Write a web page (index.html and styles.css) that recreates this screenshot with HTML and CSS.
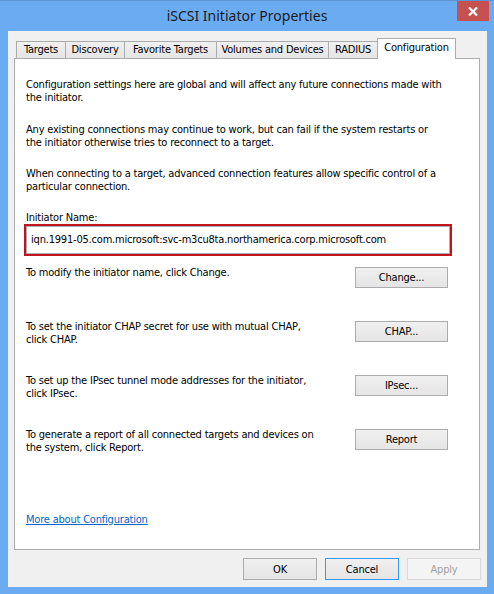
FILE: index.html
```html
<!DOCTYPE html>
<html>
<head>
<meta charset="utf-8">
<link rel="stylesheet" href="styles.css">
</head>
<body>
<div class="window">
  <div class="titlebar">
    <div class="spacer"></div>
    <div class="title">iSCSI Initiator Properties</div>
    <div class="close-wrap">
      <div class="close">
        <svg width="10" height="9" viewBox="0 0 10 9"><path d="M1 0.5 L9 8.5 M9 0.5 L1 8.5" stroke="#fff" stroke-width="2.2" fill="none"/></svg>
      </div>
    </div>
  </div>
  <div class="client">
    <div class="tabs">
      <div class="tab w1">Targets</div>
      <div class="tab w2">Discovery</div>
      <div class="tab w3">Favorite Targets</div>
      <div class="tab w4">Volumes and Devices</div>
      <div class="tab w5">RADIUS</div>
      <div class="tab selected w6">Configuration</div>
    </div>
    <div class="pane">
      <p class="para p1">Configuration settings here are global and will affect any future connections made with<br>the initiator.</p>
      <p class="para p2">Any existing connections may continue to work, but can fail if the system restarts or<br>the initiator otherwise tries to reconnect to a target.</p>
      <p class="para p3">When connecting to a target, advanced connection features allow specific control of a<br>particular connection.</p>
      <div class="label">Initiator Name:</div>
      <div class="namebox"><div class="nameinner">iqn.1991-05.com.microsoft:svc-m3cu8ta.northamerica.corp.microsoft.com</div></div>
      <div class="row"><span class="rowtext">To modify the initiator name, click Change.</span><span class="btn side">Change...</span></div>
      <div class="row"><span class="rowtext">To set the initiator CHAP secret for use with mutual CHAP,<br>click CHAP.</span><span class="btn side">CHAP...</span></div>
      <div class="row"><span class="rowtext">To set up the IPsec tunnel mode addresses for the initiator,<br>click IPsec.</span><span class="btn side">IPsec...</span></div>
      <div class="row"><span class="rowtext">To generate a report of all connected targets and devices on<br>the system, click Report.</span><span class="btn side">Report</span></div>
      <a class="link" href="#">More about Configuration</a>
    </div>
    <div class="footer">
      <span class="btn foot">OK</span>
      <span class="btn foot default">Cancel</span>
      <span class="btn foot disabled">Apply</span>
    </div>
  </div>
</div>
</body>
</html>
```
FILE: styles.css
```css
html, body {
  margin: 0;
  padding: 0;
  background: #6aabf1;
}
body {
  font-family: "DejaVu Sans Condensed", "DejaVu Sans", sans-serif;
  font-stretch: condensed;
  font-size: 11px;
  letter-spacing: -0.2px;
  color: #000;
}
.window {
  width: 494px;
  height: 594px;
  box-sizing: border-box;
  background: #6aabf1;
  border-top: 1px solid #5b95d6;
}
.titlebar {
  height: 30px;
  display: grid;
  grid-template-columns: 1fr auto 1fr;
}
.title {
  font-family: "Noto Sans", "Open Sans", sans-serif;
  font-stretch: normal;
  letter-spacing: 0;
  font-size: 14px;
  color: #1b1b1b;
  line-height: 29px;
}
.close-wrap {
  display: flex;
  justify-content: flex-end;
  align-items: flex-start;
  padding-right: 5px;
}
.close {
  width: 32px;
  height: 20px;
  background: #c75050;
  display: flex;
  align-items: center;
  justify-content: center;
}
.client {
  margin-left: 8px;
  width: 479px;
  height: 556px;
  box-sizing: border-box;
  background: #f0f0f0;
  padding: 7px 6px 0 6px;
  display: flex;
  flex-direction: column;
}
.tabs {
  display: flex;
  align-items: flex-end;
  height: 20px;
  padding-left: 2px;
  position: relative;
  z-index: 2;
}
.tab {
  height: 17px;
  box-sizing: border-box;
  border: 1px solid #acacac;
  border-bottom: none;
  margin-right: -1px;
  background: linear-gradient(#f0f0f0, #e5e5e5);
  text-align: center;
  line-height: 16px;
  white-space: nowrap;
}
.tab.selected {
  height: 21px;
  margin-bottom: -1px;
  background: #fff;
  line-height: 17px;
}
.w1 { width: 50px; }
.w2 { width: 60px; }
.w3 { width: 93px; }
.w4 { width: 113px; }
.w5 { width: 50px; }
.w6 { width: 79px; }
.pane {
  width: 466px;
  height: 492px;
  box-sizing: border-box;
  background: #fff;
  border: 1px solid #acacac;
  padding: 0 11px;
  display: flex;
  flex-direction: column;
  align-items: flex-start;
  position: relative;
  z-index: 1;
}
.para {
  margin: 0;
  line-height: 13px;
  white-space: nowrap;
}
.p1 { margin-top: 19px; }
.p2 { margin-top: 19px; }
.p3 { margin-top: 18px; }
.label {
  margin-top: 18px;
  line-height: 13px;
}
.namebox {
  margin-left: -2px;
  width: 428px;
  height: 32px;
  box-sizing: border-box;
  border: 2px solid #c0141e;
}
.nameinner {
  height: 100%;
  box-sizing: border-box;
  border: 1px solid #abadb3;
  padding-left: 4px;
  line-height: 25px;
  white-space: nowrap;
}
.row {
  display: flex;
  justify-content: space-between;
  align-items: flex-start;
  width: 422px;
  height: 54px;
}
.namebox + .row { margin-top: 10px; }
.rowtext {
  line-height: 13px;
  white-space: nowrap;
}
.btn {
  display: flex;
  align-items: center;
  justify-content: center;
  box-sizing: border-box;
  border: 1px solid #acacac;
  background: linear-gradient(#f0f0f0, #e5e5e5);
  white-space: nowrap;
}
.side {
  width: 93px;
  height: 21px;
  margin-top: 1px;
}
.link {
  margin-top: 31px;
  color: #0066cc;
  line-height: 13px;
}
.footer {
  display: flex;
  justify-content: flex-end;
  gap: 8px;
  margin-top: 8px;
}
.foot {
  width: 74px;
  height: 22px;
}
.foot.default {
  border-color: #3399ff;
}
.foot.disabled {
  border-color: #d9d9d9;
  background: #f4f4f4;
  color: #a0a0a0;
}
```
